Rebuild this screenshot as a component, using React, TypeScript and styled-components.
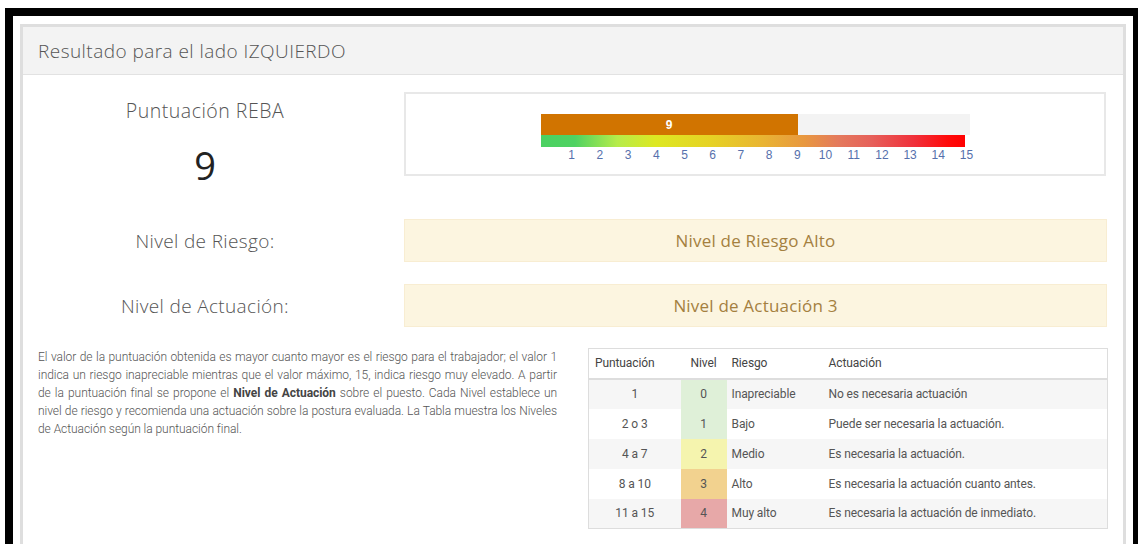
import React from "react";
import styled, { createGlobalStyle } from "styled-components";

const GlobalStyle = createGlobalStyle`
  html, body {
    margin: 0;
    padding: 0;
    background: #ffffff;
    overflow: hidden;
  }
  body {
    font-family: "Open Sans", "Noto Sans", sans-serif;
  }
  * { box-sizing: border-box; }
`;

const DISPLAY_FONT = `"Open Sans", "Noto Sans", sans-serif`;
const TABLE_FONT = `Roboto, "Liberation Sans", sans-serif`;

const Frame = styled.div`
  margin: 8px 0 0 5px;
  width: 1136px;
  border: 8px solid #000;
  border-bottom: none;
  padding: 8px 7px 0 7px;
  background: #fff;
`;

const Panel = styled.section`
  border: 3px solid #dedede;
  border-bottom: none;
  background: #fff;
  height: 540px;
`;

const PanelHeader = styled.header`
  height: 48px;
  background: #f3f3f3;
  border-bottom: 1px solid #e2e2e2;
  display: flex;
  align-items: center;
  padding: 0 15px;
  font-family: ${DISPLAY_FONT};
  font-weight: 300;
  font-size: 19px;
  letter-spacing: 0.45px;
  color: #555;
`;

const PanelBody = styled.div`
  padding: 17px 17px 0 15px;
  display: flex;
  flex-direction: column;
`;

const TopRow = styled.div`
  display: grid;
  grid-template-columns: 334px 702px;
  column-gap: 32px;
  align-items: start;
`;

const ScoreColumn = styled.div`
  display: flex;
  flex-direction: column;
  align-items: center;
  padding-top: 7px;
`;

const ScoreTitle = styled.div`
  font-family: ${DISPLAY_FONT};
  font-weight: 300;
  font-size: 19.5px;
  letter-spacing: 0.5px;
  color: #555;
  line-height: 24px;
`;

const ScoreValue = styled.div`
  font-family: ${DISPLAY_FONT};
  font-weight: 400;
  font-size: 38px;
  color: #222;
  line-height: 40px;
  margin-top: 22px;
`;

const ScaleCard = styled.div`
  height: 84px;
  border: 2px solid #e8e8e8;
  display: flex;
  justify-content: center;
  padding-top: 20px;
`;

const Scale = styled.div`
  width: 429px;
  display: flex;
  flex-direction: column;
`;

const Track = styled.div`
  height: 21px;
  background: #f3f3f3;
  display: flex;
`;

const Fill = styled.div`
  height: 100%;
  background: #d17400;
  color: #fff;
  font-family: "Liberation Sans", Arial, sans-serif;
  font-weight: bold;
  font-size: 12px;
  display: flex;
  align-items: center;
  justify-content: center;
`;

const Gradient = styled.div`
  width: 424px;
  height: 12px;
  background: linear-gradient(
    to right,
    #4bd162 0%,
    #4fd262 8%,
    #b6ec4a 18%,
    #dde822 27%,
    #e6d224 40%,
    #e9b532 52%,
    #e8983f 62%,
    #e47a5c 70%,
    #e6605a 78%,
    #f0303a 88%,
    #ff0a0a 96%,
    #ff0000 100%
  );
`;

const Ticks = styled.div`
  position: relative;
  height: 16px;
`;

const Tick = styled.span`
  position: absolute;
  top: 0;
  transform: translateX(-50%);
  font-family: "Liberation Sans", Arial, sans-serif;
  font-size: 12px;
  line-height: 16px;
  color: #5670ac;
`;

const LevelRow = styled.div<{ $gap: number }>`
  display: grid;
  grid-template-columns: 334px 703px;
  column-gap: 32px;
  align-items: center;
  margin-top: ${(p) => p.$gap}px;
`;

const LevelLabel = styled.div`
  text-align: center;
  font-family: ${DISPLAY_FONT};
  font-weight: 300;
  font-size: 19px;
  letter-spacing: 0.35px;
  color: #555;
`;

const LevelAlert = styled.div`
  height: 43px;
  background: #fcf5e0;
  border: 1px solid #f8edd2;
  display: flex;
  align-items: center;
  justify-content: center;
  font-family: ${DISPLAY_FONT};
  font-size: 17px;
  letter-spacing: 0.2px;
  color: #a4803f;
`;

const DetailRow = styled.div`
  display: grid;
  grid-template-columns: 519px 520px;
  column-gap: 31px;
  margin-top: 21px;
  align-items: start;
`;

const Description = styled.p`
  margin: 0;
  font-family: ${TABLE_FONT};
  font-weight: 300;
  font-size: 12px;
  line-height: 18px;
  letter-spacing: -0.05px;
  color: #555;
  text-align: justify;
  b { font-weight: 700; color: #444; }
`;

const LevelTable = styled.table`
  width: 520px;
  border-collapse: collapse;
  border: 1px solid #dddddd;
  font-family: ${TABLE_FONT};
  font-size: 12px;
  letter-spacing: -0.1px;
  color: #555;
`;

const HeadCell = styled.th<{ $align?: string; $pad?: number }>`
  height: 30px;
  padding: 0 ${(p) => p.$pad ?? 5}px;
  text-align: ${(p) => p.$align ?? "left"};
  font-weight: 400;
  color: #444;
  border-bottom: 2px solid #dddddd;
`;

const BodyRow = styled.tr<{ $striped: boolean }>`
  background: ${(p) => (p.$striped ? "#f6f6f6" : "#ffffff")};
  & + & td { border-top: 1px solid #dddddd; }
`;

const Cell = styled.td<{ $align?: string; $pad?: number; $bg?: string }>`
  height: 30px;
  padding: 0 ${(p) => p.$pad ?? 5}px;
  text-align: ${(p) => p.$align ?? "left"};
  background: ${(p) => p.$bg ?? "transparent"};
  white-space: nowrap;
`;

const levels = [
  { range: "1", level: 0, risk: "Inapreciable", action: "No es necesaria actuación", color: "#dff0d8" },
  { range: "2 o 3", level: 1, risk: "Bajo", action: "Puede ser necesaria la actuación.", color: "#dff0d8" },
  { range: "4 a 7", level: 2, risk: "Medio", action: "Es necesaria la actuación.", color: "#f5f4ae" },
  { range: "8 a 10", level: 3, risk: "Alto", action: "Es necesaria la actuación cuanto antes.", color: "#f2d28f" },
  { range: "11 a 15", level: 4, risk: "Muy alto", action: "Es necesaria la actuación de inmediato.", color: "#e7a8a8" },
];

const SCORE = 9;
const MAX = 15;

export default function App() {
  const ticks = Array.from({ length: MAX }, (_, i) => i + 1);
  return (
    <>
      <GlobalStyle />
      <Frame>
        <Panel>
          <PanelHeader>Resultado para el lado IZQUIERDO</PanelHeader>
          <PanelBody>
            <TopRow>
              <ScoreColumn>
                <ScoreTitle>Puntuación REBA</ScoreTitle>
                <ScoreValue>{SCORE}</ScoreValue>
              </ScoreColumn>
              <ScaleCard>
                <Scale>
                  <Track>
                    <Fill style={{ width: `${(SCORE / MAX) * 100}%` }}>{SCORE}</Fill>
                  </Track>
                  <Gradient />
                  <Ticks>
                    {ticks.map((t) => (
                      <Tick key={t} style={{ left: `${3 + t * 28.2}px` }}>
                        {t}
                      </Tick>
                    ))}
                  </Ticks>
                </Scale>
              </ScaleCard>
            </TopRow>

            <LevelRow $gap={34}>
              <LevelLabel>Nivel de Riesgo:</LevelLabel>
              <LevelAlert>Nivel de Riesgo Alto</LevelAlert>
            </LevelRow>

            <LevelRow $gap={22}>
              <LevelLabel>Nivel de Actuación:</LevelLabel>
              <LevelAlert>Nivel de Actuación 3</LevelAlert>
            </LevelRow>

            <DetailRow>
              <Description>
                El valor de la puntuación obtenida es mayor cuanto mayor es el riesgo para el
                trabajador; el valor 1 indica un riesgo inapreciable mientras que el valor máximo,
                15, indica riesgo muy elevado. A partir de la puntuación final se propone el{" "}
                <b>Nivel de Actuación</b> sobre el puesto. Cada Nivel establece un nivel de riesgo
                y recomienda una actuación sobre la postura evaluada. La Tabla muestra los Niveles
                de Actuación según la puntuación final.
              </Description>
              <LevelTable>
                <colgroup>
                  <col style={{ width: 92 }} />
                  <col style={{ width: 46 }} />
                  <col style={{ width: 94 }} />
                  <col />
                </colgroup>
                <thead>
                  <tr>
                    <HeadCell $pad={6}>Puntuación</HeadCell>
                    <HeadCell $align="center">Nivel</HeadCell>
                    <HeadCell>Riesgo</HeadCell>
                    <HeadCell $pad={8}>Actuación</HeadCell>
                  </tr>
                </thead>
                <tbody>
                  {levels.map((l, i) => (
                    <BodyRow key={l.level} $striped={i % 2 === 0}>
                      <Cell $align="center">{l.range}</Cell>
                      <Cell $align="center" $bg={l.color}>
                        {l.level}
                      </Cell>
                      <Cell>{l.risk}</Cell>
                      <Cell $pad={8}>{l.action}</Cell>
                    </BodyRow>
                  ))}
                </tbody>
              </LevelTable>
            </DetailRow>
          </PanelBody>
        </Panel>
      </Frame>
    </>
  );
}
